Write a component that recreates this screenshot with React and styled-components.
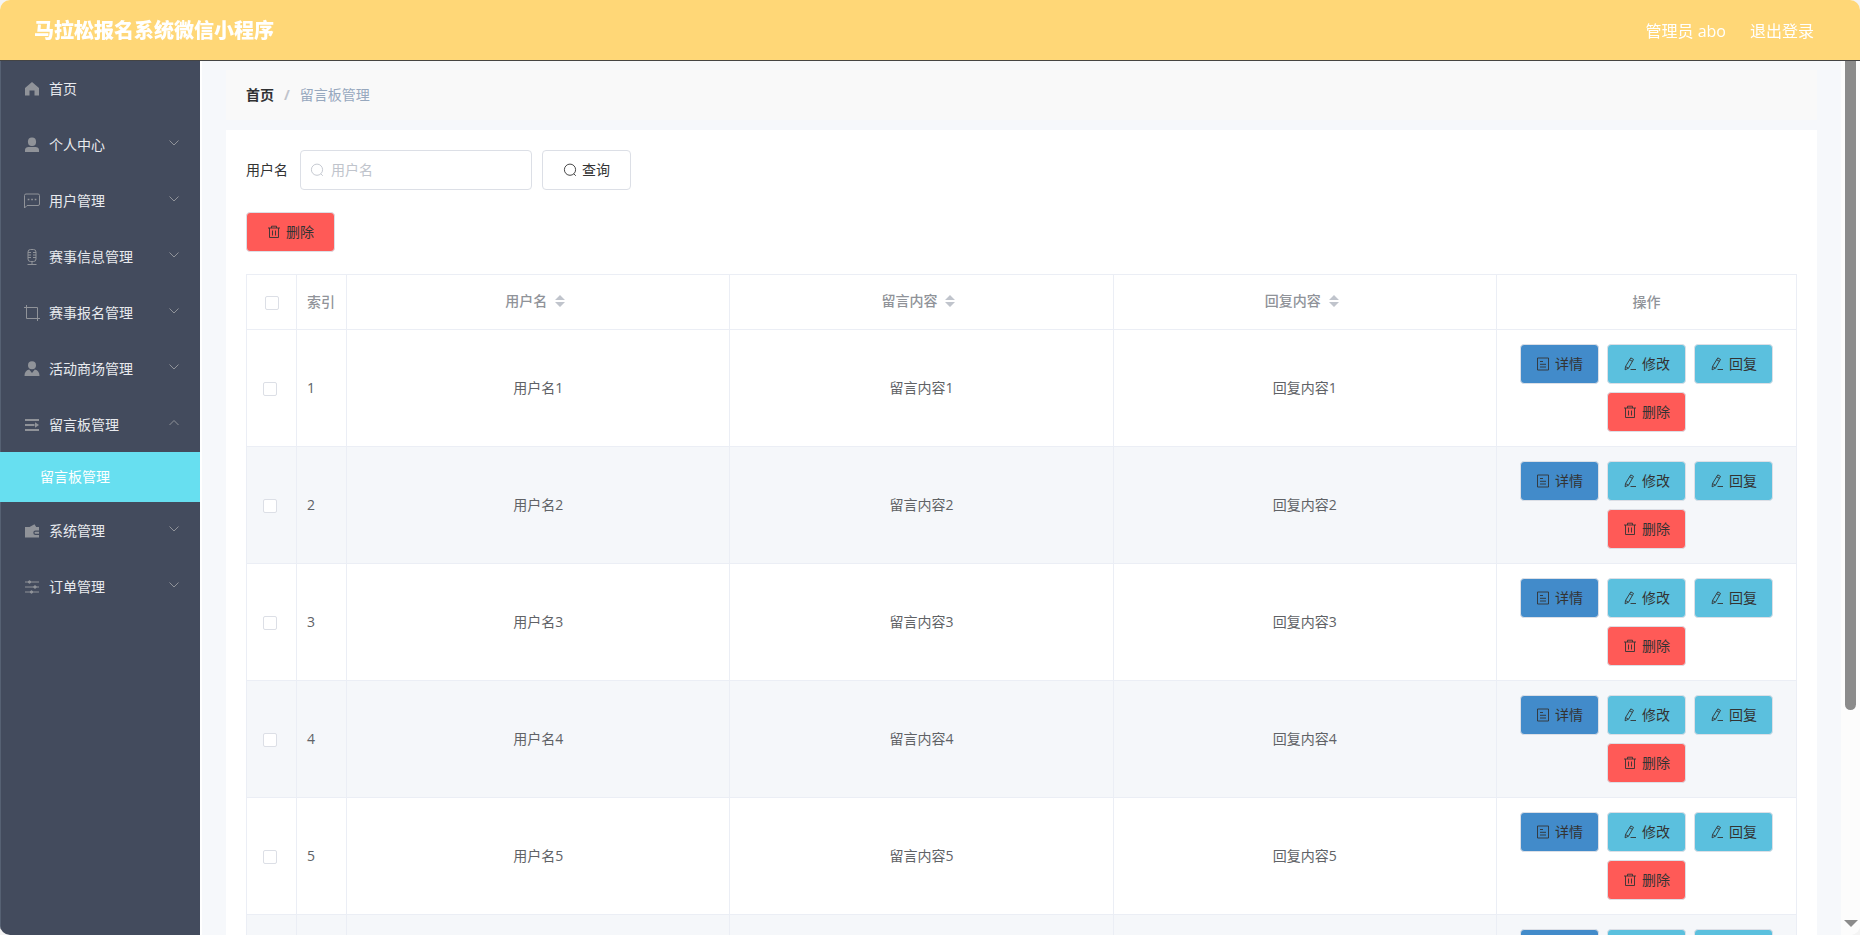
import React from "react";
import styled, { createGlobalStyle, css } from "styled-components";

const GlobalStyle = createGlobalStyle`
  *, *::before, *::after { box-sizing: border-box; }
  body {
    margin: 0;
    background: #f4f4f4;
    color: #333;
    font-family: "Open Sans", "Noto Sans CJK SC", sans-serif;
    font-size: 14px;
    line-height: 20px;
  }
  button, input { font: inherit; }
`;

const Frame = styled.div`
  display: flex;
  flex-direction: column;
  height: 100vh;
  overflow: hidden;
  border-radius: 10px;
  background: #fff;
`;

const Header = styled.header`
  display: flex;
  flex: none;
  align-items: center;
  justify-content: space-between;
  height: 60px;
  padding: 2px 46px 0 34px;
  background: #ffd777;
  color: #fff;
  position: relative;
  box-shadow: 0 1px 0 #444;
`;

const Title = styled.h1`
  margin: 0;
  font-size: 20px;
  line-height: 28px;
  font-weight: 900;
`;

const HeaderActions = styled.nav`
  display: flex;
  gap: 24px;
  font-size: 16px;
  line-height: 24px;
`;

const HeaderLink = styled.a`
  color: #fff;
  text-decoration: none;
`;

const Body = styled.div`
  display: flex;
  flex: 1;
  min-height: 0;
`;

const Sidebar = styled.nav`
  flex: none;
  width: 200px;
  background: #434b5d;
  box-shadow: inset 1px 0 0 #566173;
`;

const MenuItem = styled.button`
  display: flex;
  align-items: center;
  width: 100%;
  height: 56px;
  padding: 2px 20px 0 24px;
  border: 0;
  background: none;
  color: #e8eaee;
  text-align: left;
  cursor: pointer;

  svg { flex: none; color: #909399; }
`;

const MenuLabel = styled.span`
  flex: 1;
  padding-left: 9px;
`;

const Submenu = styled.a`
  display: flex;
  align-items: center;
  height: 50px;
  padding-left: 40px;
  background: #67dff0;
  color: #fff;
  text-decoration: none;
`;

const Main = styled.main`
  flex: 1;
  min-width: 0;
  margin-left: 2px;
  padding: 10px 24px;
  background: #f6f8fb;
  overflow-y: auto;
  scrollbar-width: none;
`;

const Breadcrumb = styled.nav`
  display: flex;
  align-items: center;
  gap: 10px;
  height: 50px;
  margin-bottom: 10px;
  padding: 0 20px;
  background: #f9f9f9;
  color: #c0c4cc;
`;

const CrumbSeparator = styled.span`
  font-weight: 700;
`;

const CrumbLink = styled.a`
  color: #303133;
  font-weight: 700;
  text-decoration: none;
`;

const CrumbCurrent = styled.span`
  color: #97a8be;
`;

const Panel = styled.section`
  padding: 20px;
  background: #fff;
`;

const SearchForm = styled.form`
  display: flex;
  align-items: center;
  gap: 10px;
  margin-bottom: 22px;
`;

const FieldLabel = styled.label`
  padding-right: 2px;
`;

const SearchField = styled.div`
  display: flex;
  align-items: center;
  gap: 7px;
  width: 232px;
  height: 40px;
  padding: 0 9px;
  border: 1px solid #dcdfe6;
  border-radius: 4px;
  color: #c0c4cc;
`;

const SearchInput = styled.input`
  flex: 1;
  min-width: 0;
  padding: 0;
  border: 0;
  outline: 0;
  background: none;
  color: #606266;

  &::placeholder { color: #c0c4cc; }
`;

const tones = {
  plain: "#fff",
  danger: "#ff5a57",
  primary: "#428bca",
  info: "#5bc0de",
};

const Button = styled.button`
  display: inline-flex;
  align-items: center;
  gap: 5px;
  height: 40px;
  padding: 0 ${(p) => (p.$compact ? 15 : 20)}px;
  border: 1px solid #dcdfe6;
  border-radius: 4px;
  background: ${(p) => tones[p.$tone]};
  color: #333;
  cursor: pointer;
`;

const Table = styled.table`
  width: 100%;
  margin-top: 22px;
  table-layout: fixed;
  border-collapse: separate;
  border-spacing: 0;
  border: solid #ebeef5;
  border-width: 1px 0 0 1px;
  color: #606266;
`;

const cell = css`
  padding: 0 10px;
  border: solid #ebeef5;
  border-width: 0 1px 1px 0;
  text-align: ${(p) => p.$align || "center"};
`;

const HeadCell = styled.th`
  ${cell}
  height: 55px;
  padding-bottom: ${(p) => (p.$sortable ? 2 : 0)}px;
  color: #909399;
  font-weight: 500;
`;

const Row = styled.tr`
  background: ${(p) => (p.$striped ? "#f5f7fa" : "#fff")};
`;

const Cell = styled.td`
  ${cell}
  height: 117px;
`;

const CheckCell = styled(Cell)`
  padding: 0 16px;
`;

const Checkbox = styled.input`
  appearance: none;
  display: inline-block;
  width: 14px;
  height: 14px;
  margin: 0;
  border: 1px solid #dcdfe6;
  border-radius: 2px;
  background: #fff;
  vertical-align: middle;
`;

const SortLabel = styled.span`
  display: inline-flex;
  align-items: center;
`;

const SortIcon = styled.svg`
  width: 24px;
  height: 14px;
  fill: #c0c4cc;
`;

const Actions = styled.div`
  display: flex;
  flex-wrap: wrap;
  justify-content: center;
  gap: 8px;
`;

const ScrollTrack = styled.div`
  display: flex;
  flex: none;
  flex-direction: column;
  align-items: center;
  justify-content: space-between;
  width: 19px;
  padding-bottom: 8px;
  background: #fcfcfc;
`;

const ScrollThumb = styled.div`
  width: 11px;
  height: 75%;
  border-radius: 0 0 6px 6px;
  background: #8b8b8b;
`;

const ScrollArrow = styled.div`
  border: solid transparent;
  border-width: 7px 7px 0;
  border-top-color: #8b8b8b;
`;

const drawings = {
  home: <path fill="currentColor" d="M8 1 1 7v7.500h4.500v-5h5v5H15V7z" />,
  user: (
    <g fill="currentColor">
      <rect x="4" y="0.500" width="8" height="8.500" rx="3.800" />
      <path d="M1 15v-2c0-2 1.500-3 3.500-3h7c2 0 3.500 1 3.500 3v2z" />
    </g>
  ),
  chat: (
    <g fill="none" stroke="currentColor">
      <path d="M.5 15V2.500A1.500 1.500 0 0 1 2 1h12a1.500 1.500 0 0 1 1.500 1.500V11a1.500 1.500 0 0 1-1.500 1.500H3z" />
      <path strokeWidth="1.600" d="M3.700 6.500h1.700M7.200 6.500h1.700M10.700 6.500h1.700" />
    </g>
  ),
  mic: (
    <g fill="none" stroke="currentColor">
      <rect x="4" y="0.500" width="8" height="12" rx="2.500" />
      <path d="M4 3.500h3M4 6h3M4 8.500h3M12 3.500H9M12 6H9M12 8.500H9M8 12.500v3M3.500 15.500h9" />
    </g>
  ),
  crop: <path fill="none" stroke="currentColor" d="M0 2.500h13.500V16M2.500 0v13.500H16" />,
  custom: (
    <g fill="currentColor">
      <circle cx="8" cy="4.200" r="4" />
      <path d="M.5 15c0-3.500 1.500-6 4.700-6.500L8 12l2.800-3.500c3.200.5 4.700 3 4.700 6.500z" />
    </g>
  ),
  board: (
    <g fill="currentColor">
      <path d="M1 2h14v2H1zM1 7h9.500v2H1zM1 12h14v2H1z" />
      <path d="M11 5.200 15 8l-4 2.800z" />
    </g>
  ),
  wallet: (
    <path
      fill="currentColor"
      fillRule="evenodd"
      d="M1 4h4.500L10.500 1.200 12.200 4H15v3.500h-3.500a2.200 2.200 0 0 0 0 4.400H15V14.500H1zM11.500 8.700H15v2h-3.500a1 1 0 0 1 0-2z"
    />
  ),
  sliders: (
    <g fill="currentColor" stroke="currentColor">
      <path d="M1 3h14M1 8h14M1 13h14" />
      <circle cx="5.500" cy="3" r="1.200" />
      <circle cx="11" cy="8" r="1.200" />
      <circle cx="7.500" cy="13" r="1.200" />
    </g>
  ),
};

function MenuIcon({ name }) {
  return (
    <svg width="16" height="16" viewBox="0 0 16 16" aria-hidden="true">
      {drawings[name]}
    </svg>
  );
}

function Chevron({ open }) {
  return (
    <svg width="12" height="12" viewBox="0 0 12 12" fill="none" stroke="currentColor" aria-hidden="true">
      <path d={open ? "M1.500 6 6 1.500 10.500 6" : "M1.500 1.500 6 6l4.500-4.500"} />
    </svg>
  );
}

const buttonDrawings = {
  search: (
    <>
      <circle cx="7" cy="6.700" r="5.600" />
      <path d="m10.800 10.800 2 2" />
    </>
  ),
  trash: <path d="M1 3h12M4.500 3V1.200h5V3M2.500 3v9.500h9V3M5.500 5.500v5M8.500 5.500v5" />,
  document: <path d="M1.500 1h11v12h-11zM4 4.500h3M4 7.300h6M4 10h6" />,
  edit: <path d="m7.800.9 2.700 1.500-5 8.800-3.400 1.600.4-3.300zM6.700 2.800l2.700 1.500M2.500 9.500l2.900 1.700M7.500 12.500h5.500" />,
};

function ButtonIcon({ name }) {
  return (
    <svg width="14" height="14" viewBox="0 0 14 14" fill="none" stroke="currentColor" strokeWidth="0.900" aria-hidden="true">
      {buttonDrawings[name]}
    </svg>
  );
}

function SortHeader({ children }) {
  return (
    <HeadCell scope="col" $sortable>
      <SortLabel>
        {children}
        <SortIcon viewBox="0 0 24 14" aria-hidden="true">
          <path d="M8 6l5-5 5 5zM8 8l5 5 5-5z" />
        </SortIcon>
      </SortLabel>
    </HeadCell>
  );
}

const menu = [
  { label: "首页", icon: "home", leaf: true },
  { label: "个人中心", icon: "user" },
  { label: "用户管理", icon: "chat" },
  { label: "赛事信息管理", icon: "mic" },
  { label: "赛事报名管理", icon: "crop" },
  { label: "活动商场管理", icon: "custom" },
  { label: "留言板管理", icon: "board", open: true, child: "留言板管理" },
  { label: "系统管理", icon: "wallet" },
  { label: "订单管理", icon: "sliders" },
];

const rowActions = [
  { label: "详情", icon: "document", tone: "primary" },
  { label: "修改", icon: "edit", tone: "info" },
  { label: "回复", icon: "edit", tone: "info" },
  { label: "删除", icon: "trash", tone: "danger" },
];

const rows = [1, 2, 3, 4, 5, 6];

export default function App() {
  return (
    <Frame>
      <GlobalStyle />
      <Header>
        <Title>马拉松报名系统微信小程序</Title>
        <HeaderActions>
          <span>管理员 abo</span>
          <HeaderLink href="#logout">退出登录</HeaderLink>
        </HeaderActions>
      </Header>
      <Body>
        <Sidebar>
          {menu.map((item) => (
            <React.Fragment key={item.label}>
              <MenuItem type="button">
                <MenuIcon name={item.icon} />
                <MenuLabel>{item.label}</MenuLabel>
                {!item.leaf && <Chevron open={item.open} />}
              </MenuItem>
              {item.child && <Submenu href="#messages">{item.child}</Submenu>}
            </React.Fragment>
          ))}
        </Sidebar>
        <Main>
          <Breadcrumb>
            <CrumbLink href="#home">首页</CrumbLink>
            <CrumbSeparator>/</CrumbSeparator>
            <CrumbCurrent>留言板管理</CrumbCurrent>
          </Breadcrumb>
          <Panel>
            <SearchForm onSubmit={(e) => e.preventDefault()}>
              <FieldLabel htmlFor="username">用户名</FieldLabel>
              <SearchField>
                <ButtonIcon name="search" />
                <SearchInput id="username" placeholder="用户名" />
              </SearchField>
              <Button $tone="plain">
                <ButtonIcon name="search" />
                查询
              </Button>
            </SearchForm>
            <Button type="button" $tone="danger">
              <ButtonIcon name="trash" />
              删除
            </Button>
            <Table>
              <colgroup>
                <col width="50" />
                <col width="50" />
                <col />
                <col />
                <col />
                <col width="300" />
              </colgroup>
              <thead>
                <tr>
                  <HeadCell scope="col">
                    <Checkbox type="checkbox" aria-label="全选" />
                  </HeadCell>
                  <HeadCell scope="col" $align="left">索引</HeadCell>
                  <SortHeader>用户名</SortHeader>
                  <SortHeader>留言内容</SortHeader>
                  <SortHeader>回复内容</SortHeader>
                  <HeadCell scope="col">操作</HeadCell>
                </tr>
              </thead>
              <tbody>
                {rows.map((n) => (
                  <Row key={n} $striped={n % 2 === 0}>
                    <CheckCell $align="left">
                      <Checkbox type="checkbox" aria-label={`选择 ${n}`} />
                    </CheckCell>
                    <Cell $align="left">{n}</Cell>
                    <Cell>用户名{n}</Cell>
                    <Cell>留言内容{n}</Cell>
                    <Cell>回复内容{n}</Cell>
                    <Cell>
                      <Actions>
                        {rowActions.map((action) => (
                          <Button key={action.label} type="button" $compact $tone={action.tone}>
                            <ButtonIcon name={action.icon} />
                            {action.label}
                          </Button>
                        ))}
                      </Actions>
                    </Cell>
                  </Row>
                ))}
              </tbody>
            </Table>
          </Panel>
        </Main>
        <ScrollTrack aria-hidden="true">
          <ScrollThumb />
          <ScrollArrow />
        </ScrollTrack>
      </Body>
    </Frame>
  );
}
